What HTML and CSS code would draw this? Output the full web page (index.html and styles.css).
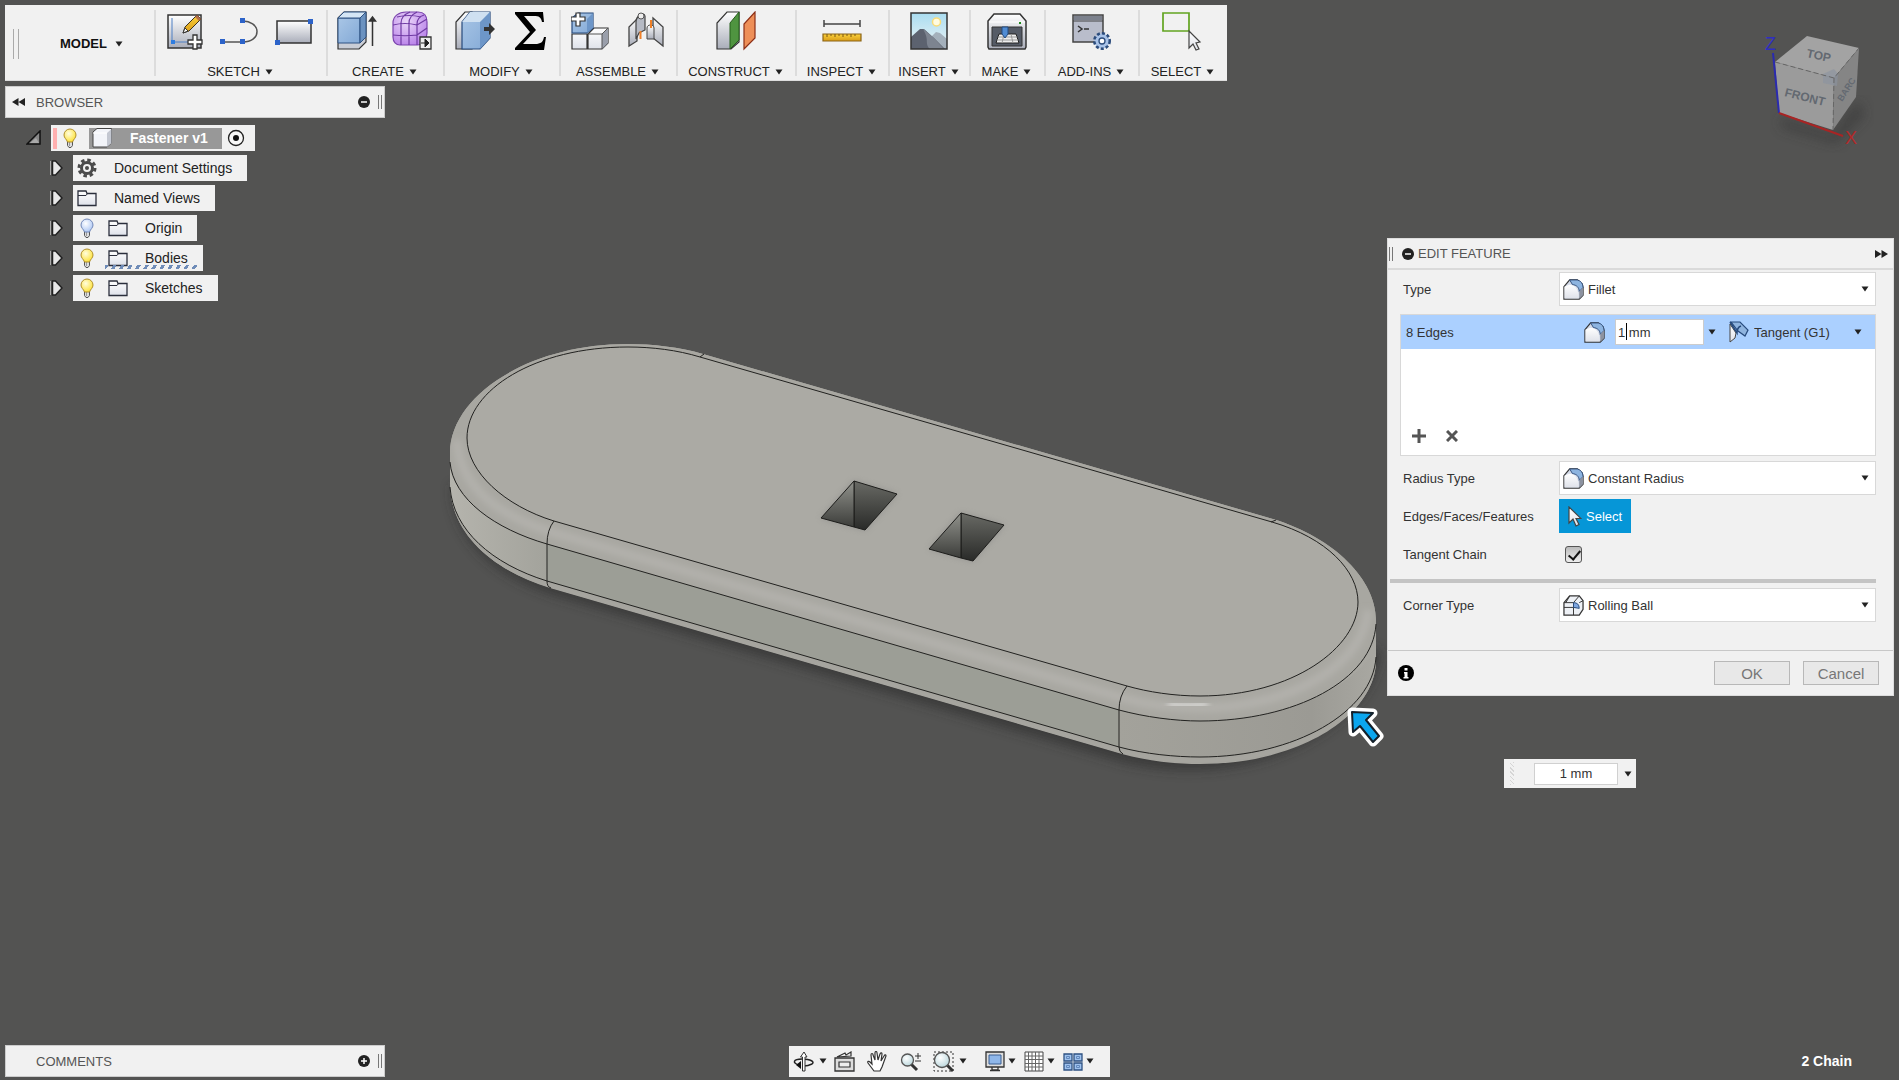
FILE: index.html
```html
<!DOCTYPE html>
<html lang="en">
<head>
    <meta charset="UTF-8">
    <meta name="viewport" content="width=device-width, initial-scale=1.0">
    <title>Fastener v1</title>
    <link rel="stylesheet" href="styles.css">
</head>
<body>
    <!-- shared icons -->
    <svg class="defs" aria-hidden="true">
        <defs>
            <linearGradient id="steel" x1="0" y1="0" x2="0" y2="1"><stop offset="0" stop-color="#fff"/><stop offset="1" stop-color="#a9adb9"/></linearGradient>
            <linearGradient id="paper" x1="0" y1="0" x2="0" y2="1"><stop offset="0" stop-color="#fff"/><stop offset="1" stop-color="#dfe2ea"/></linearGradient>
            <linearGradient id="blue" x1="0" y1="0" x2="1" y2="1"><stop offset="0" stop-color="#a9c6e6"/><stop offset="1" stop-color="#83a9d6"/></linearGradient>
            <linearGradient id="sky" x1="0" y1="0" x2="0" y2="1"><stop offset="0" stop-color="#a9dcf0"/><stop offset="1" stop-color="#eef4f5"/></linearGradient>
            <linearGradient id="gold" x1="0" y1="0" x2="0" y2="1"><stop offset="0" stop-color="#fbd23c"/><stop offset="1" stop-color="#d99c17"/></linearGradient>
            <radialGradient id="purple" cx="0.4" cy="0.3" r="0.8"><stop offset="0" stop-color="#e9d5f8"/><stop offset="1" stop-color="#b57be8"/></radialGradient>
            <radialGradient id="glow" cx="0.4" cy="0.35" r="0.7"><stop offset="0" stop-color="#fffde0"/><stop offset="1" stop-color="#fde02e"/></radialGradient>
            <radialGradient id="dim" cx="0.4" cy="0.35" r="0.7"><stop offset="0" stop-color="#fff"/><stop offset="1" stop-color="#a9c4f3"/></radialGradient>
            <radialGradient id="lens" cx="0.4" cy="0.35" r="0.7"><stop offset="0" stop-color="#fff"/><stop offset="1" stop-color="#b9d6dc"/></radialGradient>
        </defs>
        <symbol id="caret" viewBox="0 0 8 6"><path d="M0.5 0.5h7L4 5.5z" fill="#222"/></symbol>
        <symbol id="folder" viewBox="0 0 20 18">
            <path d="M1 16.500V2h8l1 2.500h9v12z" fill="url(#paper)" stroke="#2b2f3c" stroke-width="1.300"/>
            <path d="M1 6.500h8l1.500-2" fill="none" stroke="#2b2f3c"/>
        </symbol>
        <symbol id="bulb-base" viewBox="0 0 20 20">
            <path d="M7.500 13.500h5v4l-1.500 2H9l-1.500-2z" fill="#ddd" stroke="#555"/>
            <path d="M9.500 14v4" stroke="#999"/>
        </symbol>
        <symbol id="bulb-on" viewBox="0 0 20 20">
            <use href="#bulb-base"/>
            <path d="M10 1a6 6 0 0 0-6 6c0 3 2.500 4 3.500 7h5c1-3 3.500-4 3.500-7a6 6 0 0 0-6-6z" fill="url(#glow)" stroke="#b08f2c"/>
        </symbol>
        <symbol id="bulb-off" viewBox="0 0 20 20">
            <use href="#bulb-base"/>
            <path d="M10 1a6 6 0 0 0-6 6c0 3 2.500 4 3.500 7h5c1-3 3.500-4 3.500-7a6 6 0 0 0-6-6z" fill="url(#dim)" stroke="#7288b8"/>
        </symbol>
        <symbol id="expand" viewBox="0 0 14 18">
            <path d="M1.500 2v14" stroke="#aaa"/>
            <path d="M3.500 2h3l6.500 7-6.500 7h-3z" fill="#e8e8e8" stroke="#222" stroke-width="1.500"/>
        </symbol>
        <symbol id="fillet" viewBox="0 0 22 22">
            <path d="M1 21V8L7 1h8l5 4 1 4v8l-4 4z" fill="#d5dcea" stroke="#333" stroke-width="1.300"/>
            <path d="M7 1h8c4 1 6 4 6 8l-4 4c0-4-3-7-7-7z" fill="#8db4e0" stroke="#33507c"/>
            <path d="M1.500 20.500V8l5-2c6 0 10 4 10 14.500z" fill="url(#paper)"/>
            <path d="M17 13v8l4-4V9z" fill="#8c92a0"/>
        </symbol>
        <symbol id="pointer" viewBox="0 0 14 21"><path d="M1 1v16l4-4 3 7 3-1.500-3-6h5z" fill="url(#paper)" stroke="#444" stroke-width="1.200"/></symbol>
    </svg>

    <div class="app">
        <svg class="scene" viewBox="0 0 1899 1080" preserveAspectRatio="xMidYMid slice" role="img" aria-label="Fastener body">
            <defs>
                <filter id="shadow" x="-10%" y="-10%" width="120%" height="130%"><feGaussianBlur stdDeviation="6"/></filter>
                <filter id="soft" x="-20%" y="-20%" width="140%" height="140%"><feGaussianBlur stdDeviation="3"/></filter>
                <linearGradient id="side" gradientUnits="userSpaceOnUse" x1="449" y1="0" x2="1377" y2="0">
                    <stop offset="0" stop-color="#b5b4ad"/><stop offset="0.105" stop-color="#a3a39c"/><stop offset="0.106" stop-color="#9c9e96"/>
                    <stop offset="0.721" stop-color="#9c9e96"/><stop offset="0.722" stop-color="#a3a29b"/><stop offset="0.93" stop-color="#9b9a94"/><stop offset="1" stop-color="#a9a8a2"/>
                </linearGradient>
                <linearGradient id="hole" x1="0" y1="0" x2="0" y2="1"><stop offset="0" stop-color="#696a65"/><stop offset="1" stop-color="#292a28"/></linearGradient>
                <linearGradient id="holeLeft" x1="0" y1="0" x2="0" y2="1"><stop offset="0" stop-color="#92938d"/><stop offset="1" stop-color="#3c3d3a"/></linearGradient>
                <clipPath id="clip"><path d="M703 354C680 347 652 344 627 344C530 344 450 395 450 453V483C450 535 495 571 550 588L1122 754C1148 761 1175 764 1200 764C1300 764 1376 715 1376 660V620C1376 580 1335 538 1273 519z"/></clipPath>
            </defs>
            <path d="M452 485C452 540 495 575 550 594L1122 762C1260 795 1378 720 1380 650z" fill="#2c2c2c" opacity="0.600" filter="url(#shadow)"/>
            <g clip-path="url(#clip)">
                <path d="M440 330H1390V780H440z" fill="#a5a49e"/>
                <path d="M449 460C452 499 495 529 547 544L1119 710C1145 717 1175 721 1200 721C1295 721 1374 680 1377 622V655C1374 712 1295 757 1200 757C1175 757 1145 754 1119 747L547 581C492 564 452 530 449 485z" fill="url(#side)"/>
                <path d="M440 330H1390V622C1374 680 1295 721 1200 721C1175 721 1145 717 1119 710L547 544C495 529 452 499 449 460z" fill="#a8a7a1"/>
                <path d="M457 440C460 492 505 517 551 532L1123 698C1148 705 1175 708 1200 708C1290 708 1364 665 1368 610" fill="none" stroke="#b2b1ac" stroke-width="9" filter="url(#soft)"/>
                <path d="M1168 704C1182 706 1195 706 1208 704" fill="none" stroke="#fff" stroke-width="3" filter="url(#soft)"/>
                <path d="M449 489C452 534 492 568 547 585L1119 751C1145 758 1175 761 1200 761C1295 761 1374 716 1377 659" fill="none" stroke="#a6a59f" stroke-width="3"/>
            </g>
            <g fill="none" stroke="#222220">
                <path d="M700 357C677 350 652 347 628 347C535 347 467 390 467 438C467 472 505 506 554 521L1127 686C1148 692 1174 696 1200 696C1293 696 1358 647 1358 602C1358 571 1327 538 1272 522z" fill="#abaaa4"/>
                <path d="M450 462C453 499 495 529 547 544L1119 710C1145 717 1175 721 1200 721C1295 721 1373 680 1376 624"/>
                <path d="M450 487C453 530 492 564 547 581L1119 747C1145 754 1175 757 1200 757C1295 757 1373 712 1376 657"/>
                <path d="M554 521Q547 530 547 544V581Q547 587 551 588M1127 686Q1119 696 1119 710V747Q1119 752 1123 754M700 357L704 354M1271 522L1276 520"/>
            </g>
            <g stroke="#1d1d1b">
                <path d="M854 481L897 494L865 530L821 518z" fill="#777" stroke="none" opacity="0.500" filter="url(#soft)"/>
                <path d="M854 481L897 494L865 530L854 527z" fill="url(#hole)"/>
                <path d="M854 481V527L821 518z" fill="url(#holeLeft)"/>
                <path d="M961 513L1004 525L973 561L929 549z" fill="#777" stroke="none" opacity="0.500" filter="url(#soft)"/>
                <path d="M961 513L1004 525L973 561L961 558z" fill="url(#hole)"/>
                <path d="M961 513V558L929 549z" fill="url(#holeLeft)"/>
            </g>
            <g stroke-linejoin="round">
                <path d="M1352 712L1373 713L1366 720L1379 736L1373 742L1360 726L1353 732z" fill="#fff" stroke="#fff" stroke-width="9"/>
                <path d="M1352 712L1373 713L1366 720L1379 736L1373 742L1360 726L1353 732z" fill="#0ba6ee" stroke="#14202a" stroke-width="2"/>
            </g>
        </svg>

        <div class="workspace">
            <div class="left">
                <header class="toolbar">
                    <div class="mode">
                        <span class="grip"></span>
                        <button class="menu bold">MODEL <svg class="caret"><use href="#caret"/></svg></button>
                    </div>
                    <div class="group">
                        <div class="icons">
                            <button aria-label="Create Sketch"><svg width="38" height="38" viewBox="0 0 38 38">
                                <path d="M2 3h33v33H2z" fill="url(#steel)" stroke="#333" stroke-width="1.500"/>
                                <path d="M6 6v24h18" fill="none" stroke="#4d7fc4"/><path d="M5 28h4v4H5z" fill="#2f7de0"/>
                                <path d="M17 21l2-6L31 3l4 4-12 12z" fill="url(#gold)" stroke="#3a3020"/><path d="M29 5l2-2 4 4-2 2z" fill="#b26d4a"/><path d="M17 21l2-5 3 3z" fill="#fff" stroke="#333"/>
                                <path d="M27 23h4v5h5v4h-5v5h-4v-5h-5v-4h5z" fill="#fff" stroke="#333" stroke-width="1.300"/>
                            </svg></button>
                            <button aria-label="Line"><svg width="40" height="38" viewBox="0 0 40 38">
                                <path d="M3 30h21c8 0 14-4 14-10.500S31 9 24 9" fill="none" stroke="#555" stroke-width="1.500"/>
                                <path d="M1 27h5v5H1zM21 27h5v5h-5zM21 6h5v5h-5z" fill="#2c63c9"/>
                            </svg></button>
                            <button aria-label="Rectangle"><svg width="40" height="38" viewBox="0 0 40 38">
                                <path d="M3 9h34v22H3z" fill="url(#steel)" stroke="#333" stroke-width="1.500"/>
                                <path d="M1 28h5v5H1zM34 7h5v5h-5z" fill="#2c63c9"/>
                            </svg></button>
                        </div>
                        <button class="menu">SKETCH <svg class="caret"><use href="#caret"/></svg></button>
                    </div>
                    <div class="group">
                        <div class="icons">
                            <button aria-label="Extrude"><svg width="40" height="40" viewBox="0 0 40 40">
                                <path d="M1 38V7l6-6h22v30l-7 7z" fill="#c9cdd6" stroke="#333" stroke-width="1.200"/>
                                <path d="M1 32V7h22v25z" fill="url(#blue)" stroke="#2f5283"/><path d="M1 7l6-6h22l-6 6z" fill="#d5e6f5" stroke="#2f5283"/><path d="M23 7l6-6v25l-6 6z" fill="#6b92c0" stroke="#2f5283"/>
                                <path d="M35.500 35V7M32.500 10l3-4 3 4z" stroke="#333" fill="#333" stroke-width="1.500"/>
                            </svg></button>
                            <button aria-label="Create Form"><svg width="40" height="40" viewBox="0 0 40 40">
                                <path d="M1 12C1 5 7 1 14 1h12c6 0 9 4 9 10v11c0 5-4 12-10 12H8c-4 0-7-3-7-8z" fill="url(#purple)" stroke="#7b45ad" stroke-width="1.200"/>
                                <path d="M1 14c8-2 16-2 24 0M1 24c8 1 16 1 24 0M9 34V12c0-6 4-9 9-11M17 34V12c0-6 4-9 8-11M25 34V13c0-5 4-8 7-9M25 14l10-6M25 24l10-7M5 6c8-2 16-2 24 0" fill="none" stroke="#6f3aa3" stroke-width="1.200"/>
                                <path d="M28 26h11v12H28z" fill="#eee" stroke="#333" stroke-width="1.300"/><path d="M29 32h5M33 28l4 4-4 4z" stroke="#222" fill="#222"/>
                            </svg></button>
                        </div>
                        <button class="menu">CREATE <svg class="caret"><use href="#caret"/></svg></button>
                    </div>
                    <div class="group">
                        <div class="icons wide">
                            <button aria-label="Press Pull"><svg width="40" height="40" viewBox="0 0 40 40">
                                <path d="M1 38V11l9-10h7v37z" fill="url(#steel)" stroke="#333" stroke-width="1.200"/>
                                <path d="M7 38V11l8-10h20v26L25 38z" fill="url(#blue)" stroke="#274a7c" stroke-width="1.200"/><path d="M7 11l8-10h20l-9 10z" fill="#cfe0f1"/><path d="M25 38V11L35 1v26z" fill="#6d96c8"/>
                                <path d="M29 16h5v-4l6 6-6 6v-4h-5z" fill="#333"/>
                            </svg></button>
                            <button aria-label="Parameters"><svg width="34" height="40" viewBox="0 0 34 40"><path d="M2 1h28l1 10h-2c-1-5-3-6-8-6H11l12 14L10 33h12c6 0 8-2 9-7h2l-2 13H2v-2l15-16L2 3z" fill="#000"/></svg></button>
                        </div>
                        <button class="menu">MODIFY <svg class="caret"><use href="#caret"/></svg></button>
                    </div>
                    <div class="group">
                        <div class="icons wide">
                            <button aria-label="New Component"><svg width="38" height="40" viewBox="0 0 38 40">
                                <path d="M1 38V23h15v15zM17 38V23l6-6h14v15l-6 6z" fill="url(#paper)" stroke="#333" stroke-width="1.200"/><path d="M31 38V23l6-6v15z" fill="#9a9fab"/><path d="M17 23h14v15M31 23l6-6" fill="none" stroke="#555"/>
                                <path d="M1 22V7l6-5h15v15l-6 5z" fill="url(#blue)" stroke="#274a7c" stroke-width="1.200"/><path d="M16 22V8l6-6v15z" fill="#6d96c8"/>
                                <path d="M5 2h4v4h5v4H9v5H5v-5H0V6h5z" fill="#fff" stroke="#333" stroke-width="1.200"/>
                            </svg></button>
                            <button aria-label="Joint"><svg width="38" height="38" viewBox="0 0 38 38">
                                <path d="M2 34V15l8-8v22zM36 34L26 26V6l10 9z" fill="url(#steel)" stroke="#444" stroke-width="1.300"/>
                                <path d="M9 10c0-6 8-11 9-6v14l-6 3-3 6z" fill="#b6bac4" stroke="#444" stroke-width="1.200"/><circle cx="14" cy="4" r="3" fill="#eee" stroke="#555"/>
                                <path d="M20 16c0-4 7-4 7 0v11h-7z" fill="url(#steel)" stroke="#444"/><path d="M13.500 19v8M24 8v8" stroke="#f08028" stroke-width="2"/>
                            </svg></button>
                        </div>
                        <button class="menu">ASSEMBLE <svg class="caret"><use href="#caret"/></svg></button>
                    </div>
                    <div class="group">
                        <div class="icons">
                            <button aria-label="Offset Plane"><svg width="40" height="40" viewBox="0 0 40 40">
                                <path d="M1 38V12L11 1h12v30l-8 7z" fill="url(#steel)" stroke="#333" stroke-width="1.200"/><path d="M14 38V12l9-11v28z" fill="#4f9440" stroke="#275e1c"/>
                                <path d="M28 38V13L39 1v26z" fill="#ee8f58" stroke="#8c2f17" stroke-width="1.200"/>
                            </svg></button>
                        </div>
                        <button class="menu">CONSTRUCT <svg class="caret"><use href="#caret"/></svg></button>
                    </div>
                    <div class="group">
                        <div class="icons">
                            <button aria-label="Measure"><svg width="40" height="38" viewBox="0 0 40 38">
                                <path d="M2 12h36M2 8v7M38 8v7" stroke="#444" stroke-width="1.500"/>
                                <path d="M1 22h38v7H1z" fill="url(#gold)" stroke="#8b6417" stroke-width="1.200"/><path d="M5 22v3M9 22v2M13 22v3M17 22v2M21 22v3M25 22v2M29 22v3M33 22v2" stroke="#7a5410"/>
                            </svg></button>
                        </div>
                        <button class="menu">INSPECT <svg class="caret"><use href="#caret"/></svg></button>
                    </div>
                    <div class="group">
                        <div class="icons">
                            <button aria-label="Insert Image"><svg width="40" height="40" viewBox="0 0 40 40">
                                <path d="M2 2h36v36H2z" fill="url(#sky)"/><circle cx="27.500" cy="11" r="4" fill="#fffbe0" stroke="#f8dc7a" stroke-width="1.500"/>
                                <path d="M20 28l7-7 4 1 7 6v10H20z" fill="#a4b0bb"/><path d="M2 26l9-8 4 0 10 9 11 11H2z" fill="#5c626f"/><path d="M14 18l11 9 10 11H21c-6-6 0-8-7-20z" fill="#7d8490"/>
                                <path d="M2 2h36v36H2z" fill="none" stroke="#333" stroke-width="1.500"/>
                            </svg></button>
                        </div>
                        <button class="menu">INSERT <svg class="caret"><use href="#caret"/></svg></button>
                    </div>
                    <div class="group">
                        <div class="icons">
                            <button aria-label="3D Print"><svg width="40" height="38" viewBox="0 0 40 38">
                                <path d="M1 35V9l6-7h26l6 7v26l-1 2H2z" fill="url(#steel)" stroke="#333" stroke-width="1.500"/><path d="M2 10h36" stroke="#fff"/>
                                <path d="M5 15h30v19H5z" fill="#555b66" stroke="#333"/><path d="M9 31l3-9h17l3 9z" fill="#eee" stroke="#222"/><path d="M10 28h21M11 25h19M17 22l-2 9M24 22l2 9" stroke="#999"/>
                                <path d="M15 15h6v7l-3 4-3-4z" fill="#4f8bd3" stroke="#234a80"/><path d="M32 10h2v2h-2z" fill="#1e8a1e"/>
                            </svg></button>
                        </div>
                        <button class="menu">MAKE <svg class="caret"><use href="#caret"/></svg></button>
                    </div>
                    <div class="group">
                        <div class="icons">
                            <button aria-label="Scripts and Add-Ins"><svg width="40" height="38" viewBox="0 0 40 38">
                                <path d="M2 3h30v27H2z" fill="#b9bdcb" stroke="#444" stroke-width="1.500"/><path d="M3 4h28v4H3z" fill="#7c818d"/><path d="M2 9h30" stroke="#444"/>
                                <path d="M7 14l4 3-4 3M13 17h5" fill="none" stroke="#333" stroke-width="1.500"/>
                                <circle cx="31" cy="29" r="7.500" fill="#a9c3e8" stroke="#2c4c7c" stroke-width="3" stroke-dasharray="3 2"/><circle cx="31" cy="29" r="6.500" fill="#a9c3e8"/><circle cx="31" cy="29" r="3" fill="#fff" stroke="#2c4c7c" stroke-width="1.300"/>
                            </svg></button>
                        </div>
                        <button class="menu">ADD-INS <svg class="caret"><use href="#caret"/></svg></button>
                    </div>
                    <div class="group">
                        <div class="icons">
                            <button aria-label="Select"><svg width="44" height="40" viewBox="0 0 44 40">
                                <path d="M2 2h26v18H2z" fill="none" stroke="#62a420" stroke-width="1.700"/>
                                <path d="M28 20v17l4-4 3 6 3-1-3-6 4-1z" fill="url(#paper)" stroke="#444" stroke-width="1.200"/>
                            </svg></button>
                        </div>
                        <button class="menu">SELECT <svg class="caret"><use href="#caret"/></svg></button>
                    </div>
                </header>

                <section class="bar">
                    <svg width="13" height="8" viewBox="0 0 13 8"><path d="M6.500 0v8L0 4zM13 0v8L6.500 4z" fill="#222"/></svg>
                    <h2>BROWSER</h2>
                    <button aria-label="Collapse browser"><svg width="12" height="12" viewBox="0 0 12 12"><circle cx="6" cy="6" r="6" fill="#222"/><path d="M3 6h6" stroke="#fff" stroke-width="1.500"/></svg></button>
                    <span class="grip small"></span>
                </section>

                <ul class="tree">
                    <li class="root">
                        <svg width="15" height="16" viewBox="0 0 15 16"><path d="M14 1v13H1z" fill="#888" stroke="#111" stroke-width="1.500"/><path d="M13 13L4 13 10 8z" fill="#aaa"/></svg>
                        <div class="item">
                            <span class="mark"></span>
                            <svg class="icon"><use href="#bulb-on"/></svg>
                            <span class="active">
                                <svg class="icon" viewBox="0 0 20 20"><path d="M1 19V4l4-3.500h14.500V15L15 19z" fill="#f2f4f9" stroke="#444"/><path d="M15 19V5l4.500-4V15z" fill="#c3c7d1"/><path d="M1 5h14" stroke="#fff"/></svg>
                                Fastener v1
                            </span>
                            <svg width="18" height="18" viewBox="0 0 18 18"><circle cx="9" cy="9" r="7.500" fill="#f8f8f8" stroke="#222" stroke-width="1.300"/><circle cx="9" cy="9" r="3" fill="#111"/></svg>
                        </div>
                    </li>
                    <li>
                        <svg class="expand"><use href="#expand"/></svg>
                        <div class="item">
                            <svg class="icon" viewBox="0 0 20 20"><circle cx="10" cy="10" r="8" fill="none" stroke="#4a4a4a" stroke-width="3" stroke-dasharray="3.500 2.780"/><circle cx="10" cy="10" r="5.500" fill="none" stroke="#4a4a4a" stroke-width="3"/><circle cx="10" cy="10" r="2" fill="#4a4a4a"/></svg>
                            <span>Document Settings</span>
                        </div>
                    </li>
                    <li>
                        <svg class="expand"><use href="#expand"/></svg>
                        <div class="item"><svg class="icon"><use href="#folder"/></svg><span>Named Views</span></div>
                    </li>
                    <li>
                        <svg class="expand"><use href="#expand"/></svg>
                        <div class="item"><svg class="icon bulb"><use href="#bulb-off"/></svg><svg class="icon"><use href="#folder"/></svg><span>Origin</span></div>
                    </li>
                    <li>
                        <svg class="expand"><use href="#expand"/></svg>
                        <div class="item hatched"><svg class="icon bulb"><use href="#bulb-on"/></svg><svg class="icon"><use href="#folder"/></svg><span>Bodies</span></div>
                    </li>
                    <li>
                        <svg class="expand"><use href="#expand"/></svg>
                        <div class="item"><svg class="icon bulb"><use href="#bulb-on"/></svg><svg class="icon"><use href="#folder"/></svg><span>Sketches</span></div>
                    </li>
                </ul>
            </div>

            <div class="right">
                <svg class="cube" width="150" height="140" viewBox="0 0 150 140">
                    <path d="M39 97L93 114L118 80L125 95L96 124L42 108z" fill="#333" opacity="0.500" filter="url(#shadow)"/>
                    <path d="M67 16L119 28L94 58L35 42z" fill="#a3a3a3"/>
                    <path d="M35 42L94 58L93 110L39 93z" fill="#9b9b9b"/>
                    <path d="M94 58L119 28L116 77L93 110z" fill="#858585"/>
                    <path d="M83 54l11-5 4 5-1 12-14-3z" fill="#8a93a0" opacity="0.600"/>
                    <path d="M35 42L94 58L119 28M94 58L93 110" fill="none" stroke="#666" stroke-dasharray="5 3"/>
                    <path d="M33 33L39 93" stroke="#2a2ab0" stroke-width="2"/>
                    <path d="M39 93L103 116" stroke="#a82424" stroke-width="2"/>
                    <text x="25" y="30" class="axis z">Z</text>
                    <text x="105" y="124" class="axis x">X</text>
                    <text x="66" y="37" class="face" transform="rotate(12 66 37)">TOP</text>
                    <text x="44" y="76" class="face" transform="rotate(14 44 76)">FRONT</text>
                    <text x="102" y="82" class="face back" transform="rotate(-57 102 82)">BARC</text>
                </svg>

                <form class="panel">
                    <header>
                        <span class="grip small"></span>
                        <svg width="12" height="12" viewBox="0 0 12 12"><circle cx="6" cy="6" r="6" fill="#222"/><path d="M3 6h6" stroke="#fff" stroke-width="1.500"/></svg>
                        <h2>EDIT FEATURE</h2>
                        <svg width="13" height="8" viewBox="0 0 13 8"><path d="M0 0v8l6.500-4zM6.500 0v8L13 4z" fill="#222"/></svg>
                    </header>
                    <div class="row">
                        <label for="type">Type</label>
                        <div class="combo">
                            <svg class="shape"><use href="#fillet"/></svg>
                            <select id="type"><option>Fillet</option></select>
                            <svg class="caret"><use href="#caret"/></svg>
                        </div>
                    </div>
                    <div class="list">
                        <div class="selection">
                            <label for="radius">8 Edges</label>
                            <svg class="shape"><use href="#fillet"/></svg>
                            <span class="field"><input type="text" id="radius" value="1 mm"><span class="cursor"></span></span>
                            <svg class="caret"><use href="#caret"/></svg>
                            <svg class="tangent" width="20" height="22" viewBox="0 0 20 22"><path d="M2 1h9l8 8-3 6-7-5z" fill="#8fb4df" stroke="#274a7c" stroke-width="1.200"/><path d="M1 3l6 9-1 5-5 4z" fill="url(#paper)" stroke="#444"/><path d="M1 1l7 11c0-4 1-6 4-7" fill="none" stroke="#274a7c" stroke-width="1.500"/></svg>
                            <select aria-label="Continuity"><option>Tangent (G1)</option></select>
                            <svg class="caret"><use href="#caret"/></svg>
                        </div>
                        <div class="actions">
                            <button type="button" aria-label="Add"><svg width="14" height="14" viewBox="0 0 14 14"><path d="M7 0v14M0 7h14" stroke="#555" stroke-width="3"/></svg></button>
                            <button type="button" aria-label="Remove"><svg width="12" height="12" viewBox="0 0 12 12"><path d="M1 1l10 10M11 1L1 11" stroke="#555" stroke-width="3"/></svg></button>
                        </div>
                    </div>
                    <div class="row">
                        <label for="radiusType">Radius Type</label>
                        <div class="combo">
                            <svg class="shape"><use href="#fillet"/></svg>
                            <select id="radiusType"><option>Constant Radius</option></select>
                            <svg class="caret"><use href="#caret"/></svg>
                        </div>
                    </div>
                    <div class="row">
                        <label for="pick">Edges/Faces/Features</label>
                        <button type="button" id="pick" class="pick"><svg width="14" height="21"><use href="#pointer"/></svg>Select</button>
                    </div>
                    <div class="row">
                        <label for="chain">Tangent Chain</label>
                        <input type="checkbox" id="chain" checked>
                    </div>
                    <hr>
                    <div class="row">
                        <label for="corner">Corner Type</label>
                        <div class="combo">
                            <svg class="shape" viewBox="0 0 22 22"><path d="M1 21V8L7 1h10l4 5v9l-4 6z" fill="#eef1f6" stroke="#333" stroke-width="1.300"/><path d="M1 8h10M1 13h15M11 8v13M7 1L3 8M17 1l-6 7M21 6l-4 2" fill="none" stroke="#333"/><path d="M11 8c4 0 6 2 6 6l-6-1z" fill="#7ea6e0" stroke="#274a7c"/></svg>
                            <select id="corner"><option>Rolling Ball</option></select>
                            <svg class="caret"><use href="#caret"/></svg>
                        </div>
                    </div>
                    <footer>
                        <svg width="16" height="16" viewBox="0 0 16 16"><circle cx="8" cy="8" r="8" fill="#000"/><path d="M6.500 3h3v2.500h-3zM6 7h3.500v5h1v1.500h-5V12h1V8.500H6z" fill="#fff"/></svg>
                        <button type="submit">OK</button>
                        <button type="button">Cancel</button>
                    </footer>
                </form>

                <div class="mini">
                    <span class="zigzag"></span>
                    <input type="text" aria-label="Radius" value="1 mm">
                    <svg class="caret"><use href="#caret"/></svg>
                </div>
            </div>
        </div>

        <div class="bottom">
            <section class="bar">
                <h2>COMMENTS</h2>
                <button aria-label="Expand comments"><svg width="12" height="12" viewBox="0 0 12 12"><circle cx="6" cy="6" r="6" fill="#222"/><path d="M3 6h6M6 3v6" stroke="#fff" stroke-width="1.500"/></svg></button>
                <span class="grip small"></span>
            </section>
            <nav class="navbar">
                <button class="drop" aria-label="Orbit"><svg width="21" height="21" viewBox="0 0 21 21"><path d="M6 14C-1 12 0 8 9 8c9 0 13 3 10 5-2 1-5 2-8 2" fill="none" stroke="#222" stroke-width="1.500"/><path d="M8 10v8l-5-4z" fill="#111"/><path d="M9.500 20V6h-2L11 1l3 5h-2v14z" fill="#fff" stroke="#333"/></svg><svg class="caret"><use href="#caret"/></svg></button>
                <div class="tools">
                    <button aria-label="Look At"><svg width="21" height="21" viewBox="0 0 21 21"><path d="M1 7h19v13H1z" fill="#ddd" stroke="#333" stroke-width="1.300"/><path d="M5 11h11v5H5zM3 6l8-4 1 2 5-3v4z" fill="#eee" stroke="#333" stroke-width="1.200"/></svg></button>
                    <button aria-label="Pan"><svg width="21" height="21" viewBox="0 0 21 21"><path d="M7 20L1 12c-1-2 1-2 2-1l2 2L4 4c0-2 2-2 2 0l2 5V2c0-2 2-2 2 0l1 7 2-6c1-2 2-1 2 0l-1 7 3-5c1-2 2-1 2 0l-4 11-2 4z" fill="#fff" stroke="#333" stroke-width="1.200"/></svg></button>
                    <button aria-label="Zoom"><svg width="21" height="21" viewBox="0 0 21 21"><path d="M11 13l6 6" stroke="#333" stroke-width="3"/><circle cx="7.500" cy="9" r="6" fill="url(#lens)" stroke="#555" stroke-width="1.300"/><path d="M15 5h6M18 2v6M15 10h6" stroke="#333"/></svg></button>
                    <button class="drop" aria-label="Fit"><svg width="21" height="21" viewBox="0 0 21 21"><path d="M1 1h19v19H1z" fill="none" stroke="#333" stroke-dasharray="2 2"/><path d="M14 14l6 6" stroke="#333" stroke-width="3"/><circle cx="9" cy="9" r="7.500" fill="url(#lens)" stroke="#555" stroke-width="1.300"/></svg><svg class="caret"><use href="#caret"/></svg></button>
                </div>
                <div class="views">
                    <button aria-label="Display Settings"><svg width="20" height="21" viewBox="0 0 20 21"><path d="M1 1h18v15H1z" fill="#ddd" stroke="#333" stroke-width="1.300"/><path d="M4 4h12v9H4z" fill="#8fb7ea" stroke="#3a5e92"/><path d="M7 16v3h6v-3M5 19.500h10" fill="none" stroke="#333" stroke-width="1.300"/></svg><svg class="caret"><use href="#caret"/></svg></button>
                    <button aria-label="Grid and Snaps"><svg width="20" height="21" viewBox="0 0 20 21"><path d="M1 1h18v19H1z" fill="#fff" stroke="#444"/><path d="M4.500 1v19M8 1v19M11.500 1v19M15 1v19M1 5h18M1 8.500h18M1 12.500h18M1 16h18" stroke="#666"/></svg><svg class="caret"><use href="#caret"/></svg></button>
                    <button aria-label="Viewports"><svg width="20" height="21" viewBox="0 0 20 21"><path d="M1 3h8v7H1zM11 3h8v7h-8zM1 12h8v7H1zM11 12h8v7h-8z" fill="#9fc2ee" stroke="#2f5283" stroke-width="1.300"/><path d="M3.500 5.500h3v2h-3zM13.500 5.500h3v2h-3zM3.500 14.500h3v2h-3zM13.500 14.500h3v2h-3z" fill="none" stroke="#6289bd"/></svg><svg class="caret"><use href="#caret"/></svg></button>
                </div>
            </nav>
            <p class="status">2 Chain</p>
        </div>
    </div>
</body>
</html>
```
FILE: styles.css
```css
* {
    box-sizing: border-box;
}
body {
    margin: 0;
    font-family: "Liberation Sans", Arial, sans-serif;
    font-size: 13px;
    color: #333;
    background-color: #535352;
}
h2, p, ul {
    margin: 0;
    padding: 0;
}
h2 {
    font-size: 13px;
    font-weight: normal;
    color: #555;
}
button, input, select {
    font: inherit;
    color: inherit;
}
button {
    padding: 0;
    border: none;
    background: none;
    cursor: pointer;
}
svg {
    display: block;
    flex: none;
}
.defs {
    position: absolute;
    width: 0;
    height: 0;
}
.caret {
    width: 8px;
    height: 6px;
}
.grip {
    width: 6px;
    height: 30px;
    border-left: 1px solid #aaa;
    border-right: 1px solid #aaa;
}
.grip.small {
    width: 4px;
    height: 14px;
    border-color: #777;
}

.app {
    position: relative;
    display: flex;
    flex-direction: column;
    min-height: 100vh;
    padding: 5px 5px 3px;
}
.scene {
    position: absolute;
    inset: 0;
    width: 100%;
    height: 100%;
}
.workspace {
    position: relative;
    display: flex;
    flex: 1;
    justify-content: space-between;
}
.left {
    display: flex;
    flex-direction: column;
    align-items: flex-start;
    gap: 5px;
}
.right {
    display: flex;
    flex-direction: column;
    width: 507px;
}

/* toolbar */
.toolbar {
    display: grid;
    grid-template-columns: 149px 172px 117px 116px 117px 119px 93px 81px 75px 94px 89px;
    height: 76px;
    background-color: #f1f1f1;
    border-bottom: 1px solid #ddd;
}
.mode {
    display: flex;
    align-items: center;
    gap: 41px;
    padding: 2px 0 0 8px;
}
.group {
    display: flex;
    flex-direction: column;
    align-items: center;
    justify-content: space-between;
    padding: 6px 2px 0 0;
    border-left: 2px solid;
    border-image: linear-gradient(transparent 6px, #dcdcdc 6px, #dcdcdc 70px, transparent 70px) 1;
}
.icons {
    display: flex;
    align-items: center;
    height: 40px;
    gap: 15px;
}
.icons.wide {
    gap: 18px;
}
.menu {
    display: flex;
    align-items: center;
    gap: 5px;
    line-height: 16px;
    color: #222;
}
.menu.bold {
    gap: 8px;
    font-weight: bold;
    color: #111;
}

/* browser and comments bars */
.bar {
    display: flex;
    align-items: center;
    width: 380px;
    height: 32px;
    padding: 0 2px 0 6px;
    background-color: #f1f1f1;
    border: 1px solid #ccc;
}
.bar h2 {
    flex: 1;
    padding-left: 11px;
}
.bar .grip {
    margin-left: 8px;
}
.bottom .bar h2 {
    padding-left: 24px;
}

/* browser tree */
.tree {
    display: flex;
    flex-direction: column;
    gap: 4px;
    padding: 2px 0 0 44px;
    list-style: none;
    font-size: 14px;
}
.tree li {
    display: flex;
    align-items: center;
    gap: 10px;
}
.tree .root {
    margin-left: -23px;
}
.expand {
    width: 14px;
    height: 18px;
}
.icon {
    width: 20px;
    height: 20px;
}
.item {
    display: flex;
    align-items: center;
    height: 26px;
    padding: 0 15px 0 4px;
    background-color: #f1f1f1;
    color: #222;
}
.item span {
    padding-left: 17px;
}
.icon.bulb {
    margin-right: 11px;
}
.root .item {
    gap: 9px;
    padding: 0 10px 0 2px;
}
.root .icon {
    margin-left: -6px;
}
.item .mark {
    width: 4px;
    height: 21px;
    padding: 0;
    background-color: #ffb0b0;
}
.item .active {
    display: flex;
    align-items: center;
    gap: 18px;
    height: 21px;
    padding: 0 14px 0 9px;
    background-color: #989898;
    color: #fff;
    font-weight: bold;
}
.root .item > svg:last-child {
    margin-left: -4px;
}
.hatched {
    position: relative;
}
.hatched::after {
    content: "";
    position: absolute;
    left: 32px;
    right: 3px;
    bottom: 2px;
    height: 4px;
    background: repeating-linear-gradient(120deg, #6f8cb8 0 3px, transparent 3px 7px);
}

/* view cube */
.cube {
    align-self: flex-end;
    margin: 15px 4px 78px 0;
}
.axis {
    font-size: 18px;
}
.axis.z {
    fill: #2f2fc0;
}
.axis.x {
    fill: #b02a2a;
}
.face {
    font-size: 12px;
    font-weight: bold;
    fill: #636971;
}
.face.back {
    font-size: 9px;
}

/* edit feature panel */
.panel {
    padding-bottom: 10px;
    background-color: #f1f1f1;
    border: 1px solid #ddd;
}
.panel header {
    display: flex;
    align-items: center;
    gap: 4px;
    height: 31px;
    padding: 0 5px 0 1px;
    border-bottom: 2px solid #dadada;
}
.panel header .grip {
    margin-right: 5px;
}
.panel header h2 {
    flex: 1;
}
.row {
    display: flex;
    align-items: center;
    height: 38px;
    padding: 0 17px 0 15px;
}
.row label {
    width: 156px;
}
.combo {
    display: flex;
    flex: 1;
    align-items: center;
    gap: 4px;
    height: 34px;
    padding: 0 6px 0 3px;
    background-color: #fff;
    border: 1px solid #d8d8d8;
}
.shape {
    width: 21px;
    height: 21px;
}
select {
    flex: 1;
    padding: 0;
    border: none;
    background: none;
    appearance: none;
}
.list {
    display: flex;
    flex-direction: column;
    justify-content: space-between;
    height: 142px;
    margin: 6px 17px 3px 12px;
    background-color: #fff;
    border: 1px solid #d8d8d8;
}
.selection {
    display: flex;
    align-items: center;
    height: 34px;
    padding: 0 13px 0 5px;
    background-color: #abd0ff;
}
.selection label {
    flex: 1;
}
.field {
    position: relative;
    margin: 0 4px 0 10px;
}
.field input {
    width: 89px;
    height: 26px;
    padding: 0 2px;
    border: 1px solid #ccc;
    background-color: #fff;
}
.cursor {
    position: absolute;
    left: 11px;
    top: 4px;
    width: 1px;
    height: 17px;
    background-color: #000;
}
.tangent {
    margin: 0 5px 0 13px;
}
.selection select {
    flex: none;
    width: 100px;
}
.actions {
    display: flex;
    align-items: center;
    gap: 20px;
    padding: 0 11px 12px;
}
.pick {
    display: flex;
    align-items: center;
    gap: 4px;
    height: 34px;
    padding: 0 9px;
    background-color: #0696d7;
    color: #fff;
}
.row input {
    appearance: none;
    width: 17px;
    height: 17px;
    margin: 0 6px;
    border: 1px solid #555;
    border-radius: 3px;
    background: linear-gradient(#bbb, #eee);
}
.row input:checked::after {
    content: "";
    display: block;
    width: 5px;
    height: 10px;
    margin: 1px 5px;
    border: solid #111;
    border-width: 0 2px 2px 0;
    transform: rotate(40deg);
}
hr {
    height: 4px;
    margin: 6px 17px 3px 2px;
    border: none;
    background-color: #c4c4c4;
}
.panel footer {
    display: flex;
    align-items: center;
    gap: 13px;
    margin-top: 26px;
    padding: 10px 14px 0 10px;
    border-top: 1px solid #c8c8c8;
}
.panel footer svg {
    margin-right: auto;
}
.panel footer button {
    width: 76px;
    height: 24px;
    font-size: 15px;
    color: #777;
    background-color: #e8e8e8;
    border: 1px solid #b8b8b8;
}

/* floating value input */
.mini {
    display: flex;
    align-items: center;
    align-self: flex-start;
    gap: 6px;
    margin: 63px 0 0 117px;
    height: 29px;
    padding: 0 4px 0 6px;
    background-color: #f1f1f1;
}
.mini input {
    width: 84px;
    height: 22px;
    margin-left: 14px;
    padding: 0;
    border: 1px solid #d0d0d0;
    background-color: #fff;
    text-align: center;
}
.zigzag {
    width: 4px;
    height: 23px;
    background: repeating-linear-gradient(45deg, #d5d5d5 0 1px, transparent 1px 3px);
}

/* bottom row */
.bottom {
    position: relative;
    display: grid;
    grid-template-columns: 1fr auto 1fr;
    align-items: center;
}
.navbar {
    display: flex;
    align-items: center;
    gap: 7px;
    height: 31px;
    padding: 0 16px 0 4px;
    background-color: #f1f1f1;
}
.tools, .views {
    display: flex;
    gap: 12px;
}
.navbar button {
    display: flex;
    align-items: center;
    gap: 3px;
}
.navbar .drop {
    gap: 5px;
}
.views {
    gap: 8px;
    margin-left: 11px;
}
.status {
    justify-self: end;
    padding-right: 42px;
    font-size: 14px;
    font-weight: bold;
    color: #fff;
}
```
